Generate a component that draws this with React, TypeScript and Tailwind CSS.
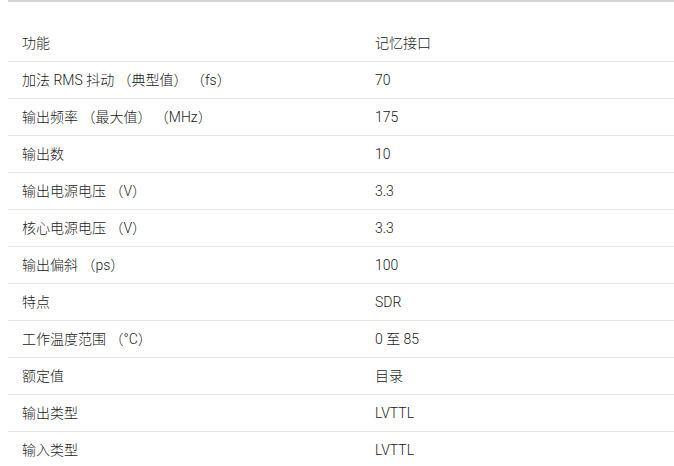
const rows: [string, string][] = [
  ["功能", "记忆接口"],
  ["加法 RMS 抖动 （典型值） （fs）", "70"],
  ["输出频率 （最大值） （MHz）", "175"],
  ["输出数", "10"],
  ["输出电源电压 （V）", "3.3"],
  ["核心电源电压 （V）", "3.3"],
  ["输出偏斜 （ps）", "100"],
  ["特点", "SDR"],
  ["工作温度范围 （°C）", "0 至 85"],
  ["额定值", "目录"],
  ["输出类型", "LVTTL"],
  ["输入类型", "LVTTL"],
];

const App = () => {
  return (
    <div
      className="w-[674px] h-[466px] overflow-hidden bg-white pl-2 text-[14px] font-light text-[#222]"
      style={{ fontFamily: 'Roboto, "Noto Sans CJK SC", sans-serif' }}
    >
      <div className="border-t-2 border-[#d4d4d4] pt-[23px]">
        {rows.map(([label, value], i) => (
          <div
            key={label}
            className={
              i === rows.length - 1
                ? "flex h-[37px] items-center"
                : "flex h-[37px] items-center border-b border-[#e6e6e6]"
            }
          >
            <div className="w-[367px] pl-[14px]">{label}</div>
            <div className="flex-1">{value}</div>
          </div>
        ))}
      </div>
    </div>
  );
};

export default App;
